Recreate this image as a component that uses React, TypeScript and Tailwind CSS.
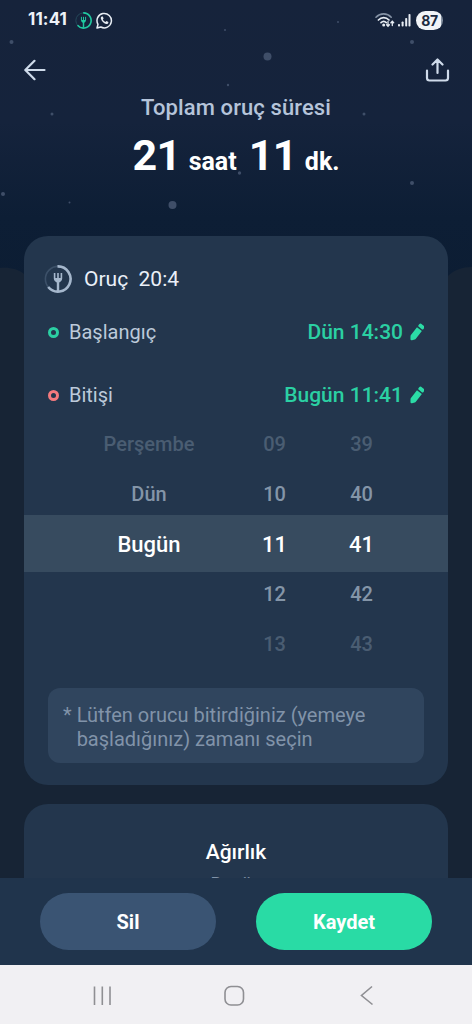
import React from 'react';

const days = ['Perşembe', 'Dün', 'Bugün', '', ''];
const hours = ['09', '10', '11', '12', '13'];
const minutes = ['39', '40', '41', '42', '43'];

const rowStyles = [
  'text-[20px] text-[#4a5d72]',
  'text-[20px] text-[#8495a8]',
  'text-[22px] text-white',
  'text-[20px] text-[#8495a8]',
  'text-[20px] text-[#4a5d72]',
];

const stars = [
  { x: 11.5, y: 42, r: 2 },
  { x: 225, y: 30, r: 1 },
  { x: 228, y: 85, r: 1.2 },
  { x: 267.5, y: 56.5, r: 4 },
  { x: 338, y: 22, r: 1 },
  { x: 412, y: 42, r: 2 },
  { x: 52, y: 114, r: 1.5 },
  { x: 364, y: 114, r: 1.5 },
  { x: 239.5, y: 173, r: 1.7 },
  { x: 412, y: 183, r: 2 },
  { x: 3, y: 194, r: 2 },
  { x: 69.5, y: 202.5, r: 1 },
  { x: 172.5, y: 205, r: 4 },
];

const Sky: React.FC = () => (
  <svg className="absolute inset-x-0 top-0" width="472" height="290" viewBox="0 0 472 290">
    <defs>
      <linearGradient id="sky" x1="0" y1="0" x2="0" y2="1">
        <stop offset="0" stopColor="#16233b" />
        <stop offset="0.42" stopColor="#15233c" />
        <stop offset="0.75" stopColor="#0d1e35" />
        <stop offset="1" stopColor="#0c1d33" />
      </linearGradient>
    </defs>
    <path d="M0 0H472V267C463 267 454 270 448 276V290H24V274C18 269 9 267 0 268Z" fill="url(#sky)" />
    {stars.map((s) => (
      <circle key={`${s.x}-${s.y}`} cx={s.x} cy={s.y} r={s.r} fill="#3f4e68" />
    ))}
  </svg>
);

const ForkRing: React.FC<{ size: number; color: string; track: string }> = ({ size, color, track }) => (
  <svg width={size} height={size} viewBox="0 0 28 28" fill="none">
    <circle cx="14" cy="14" r="12.6" stroke={track} strokeWidth="1.6" />
    <path d="M13.5 1.4A12.6 12.6 0 1 1 4.2 22" stroke={color} strokeWidth="2.6" />
    <path d="M10.6 8v5.4a3.4 3.4 0 0 0 6.8 0V8M14 8v6" stroke={color} strokeWidth="1.6" />
    <path d="M10.6 13h6.8l-.6 2.500-1.600 1.800h-2.400L11.200 15.500z" fill={color} />
    <path d="M14 15v11" stroke={color} strokeWidth="2.4" />
  </svg>
);

const Pencil: React.FC = () => (
  <svg width="15" height="19" viewBox="0 0 15 19" fill="#2bdca6">
    <g transform="rotate(38 7.5 9.500)">
      <rect x="4.600" y="-0.200" width="6.200" height="3.800" rx="1.200" />
      <path d="M4.600 5h6.200v9.800q0 .7-.4 1.200l-1.700 2.300q-1 1.200-2 0L5 16q-.4-.5-.4-1.200z" />
    </g>
  </svg>
);

const StatusBar: React.FC = () => (
  <div className="flex h-10 items-center justify-between pl-7 pr-[29px]">
    <div className="flex items-center">
      <span className="w-[40px] whitespace-nowrap font-['Inter'] text-[17px] font-bold tracking-[0.1px] text-[#eef2f8]">11:41</span>
      <div className="ml-[7px] flex items-center gap-[4px]">
        <ForkRing size={17} color="#20c9a0" track="#24485a" />
        <svg width="17" height="17" viewBox="0 0 17 17" fill="none">
          <path d="M1 16L2 12.300A7.200 7.200 0 1 1 4.800 15Z" stroke="#e7ecf3" strokeWidth="1.5" strokeLinejoin="round" />
          <path d="M5.900 4.600c-.8.300-1.300 1.200-1 2.200.8 2.600 2.700 4.500 5.200 5.200 1 .3 2-.3 2.200-1.200l.1-.8-1.900-.9-1 .9C8.300 9.500 7.300 8.600 6.800 7.500l.8-1-.8-1.900z" fill="#e7ecf3" />
        </svg>
      </div>
    </div>
    <div className="flex items-center">
      <svg width="20" height="16" viewBox="0 0 20 16" fill="none" strokeLinecap="round">
        <path d="M1 5.200C5.300.7 12 .7 16.200 5.200" stroke="#8592a5" strokeWidth="1.6" />
        <path d="M3.400 8C6.400 4.900 11 4.900 14 8" stroke="#e7ecf3" strokeWidth="1.7" />
        <path d="M6 10.700C7.600 9.200 9.700 9.200 11.300 10.700" stroke="#e7ecf3" strokeWidth="1.7" />
        <circle cx="8.7" cy="13" r="1.5" fill="#e7ecf3" />
        <path d="M13 9.500v4.500M11.600 12.800L13 14.300L14.400 12.800M17.300 13.500V9.500M15.900 10.800L17.300 9.300L18.700 10.800" stroke="#e7ecf3" strokeWidth="1.3" />
      </svg>
      <svg className="ml-[3px]" width="13" height="14" viewBox="0 0 13 14" fill="#e7ecf3">
        <rect x="0" y="11" width="2" height="2.5" rx=".8" />
        <rect x="3.6" y="8.5" width="2" height="5" rx=".8" />
        <rect x="7.2" y="5" width="2" height="8.5" rx=".8" />
        <rect x="10.5" y="1" width="2" height="12.5" rx=".8" />
      </svg>
      <div className="ml-[5px] flex h-[19px] w-[27px] items-center justify-center rounded-full bg-linear-to-r from-[#f1f4f8] from-92% to-[#8793a3] to-92% font-['Inter'] text-[14px] font-bold tracking-[-0.3px] text-[#1c2a40]">
        87
      </div>
    </div>
  </div>
);

interface TimeRowProps {
  label: string;
  value: string;
  ring: string;
}

const TimeRow: React.FC<TimeRowProps> = ({ label, value, ring }) => (
  <div className="flex h-[50px] items-center justify-between pl-6 pr-6">
    <div className="flex items-center gap-[10px]">
      <span className={`h-[11px] w-[11px] rounded-full border-[3px] ${ring}`} />
      <span className="text-[20px] text-[#bccada]">{label}</span>
    </div>
    <button className="flex items-center gap-[6px] text-[21px] font-medium text-[#2bd0a3]">
      <span className="pt-px">{value}</span>
      <Pencil />
    </button>
  </div>
);

const App: React.FC = () => (
  <div className="relative flex h-[1024px] w-[472px] flex-col overflow-hidden bg-[#172435] font-['Roboto',sans-serif]">
    <Sky />

    <div className="relative h-[878px] overflow-hidden">
      <StatusBar />

      {/* Top bar */}
      <div className="flex h-[60px] items-center justify-between pl-6 pr-[22px]">
        <svg width="22" height="22" viewBox="0 0 22 22" fill="none" stroke="#cfdbea" strokeWidth="2.2" strokeLinecap="round" strokeLinejoin="round">
          <path d="M20.500 11H1.500M10.500 1.800L1.300 11L10.500 20.200" />
        </svg>
        <svg width="25" height="24" viewBox="0 0 25 24" fill="none" stroke="#cfdbea" strokeWidth="2.2" strokeLinecap="round" strokeLinejoin="round">
          <path d="M2 12.500V20Q2 22.500 4.500 22.500H20.500Q23 22.500 23 20V12.500M12.500 15V2M7.500 6.500L12.500 1.500L17.500 6.500" />
        </svg>
      </div>

      {/* Total duration */}
      <div className="flex h-[136px] flex-col items-center">
        <h1 className="mt-[-5px] text-[22px] font-medium leading-[26px] tracking-[0.1px] text-[#b5c4da]">Toplam oruç süresi</h1>
        <p className="mt-[8px] flex items-baseline whitespace-nowrap text-[25px] font-bold leading-[52px] text-white">
          <span className="text-[43px] tracking-[-0.6px]">21</span>
          <span className="ml-[8px]">saat</span>
          <span className="ml-[12px] text-[43px] tracking-[-0.6px]">11</span>
          <span className="ml-[8px]">dk.</span>
        </p>
      </div>

      {/* Fasting card */}
      <section className="mx-6 h-[549px] rounded-[24px] bg-[#23364d] pt-[15px]">
        <div className="flex h-[56px] items-center gap-[12px] pl-5">
          <ForkRing size={28} color="#a5b7cc" track="#3c5068" />
          <span className="mt-px whitespace-pre text-[21px] text-[#eaf0f8]">Oruç  20:4</span>
        </div>
        <TimeRow label="Başlangıç" value="Dün 14:30" ring="border-[#2bcfa3]" />
        <div className="h-[13px]" />
        <TimeRow label="Bitişi" value="Bugün 11:41" ring="border-[#f47a7e]" />

        <div className="relative -mt-px h-[250px]">
          <div className="absolute inset-x-0 top-[96px] h-[57px] bg-[#374b5f]" />
          {rowStyles.map((style, i) => (
            <div key={hours[i]} className={`relative grid h-[50px] grid-cols-[164px_87px_87px] items-center pl-[43px] text-center font-medium ${style}`}>
              <span>{days[i]}</span>
              <span>{hours[i]}</span>
              <span>{minutes[i]}</span>
            </div>
          ))}
        </div>

        <div className="mx-6 mt-[19px] flex h-[75px] gap-[5px] rounded-[12px] bg-[#30455e] pl-[15px] pt-[15px] text-[20px] leading-6 text-[#8193a9]">
          <span>*</span>
          <p className="whitespace-nowrap">
            Lütfen orucu bitirdiğiniz (yemeye
            <br />
            başladığınız) zamanı seçin
          </p>
        </div>
      </section>

      {/* Weight card */}
      <section className="mx-6 mt-[19px] h-[200px] rounded-t-[24px] bg-[#23364d] pt-[35px] text-center">
        <h2 className="text-[21px] font-medium leading-[26px] text-white">Ağırlık</h2>
        <p className="mt-[7px] text-[18px] leading-[24px] text-[#8193a9]">Bugün</p>
      </section>
    </div>

    <footer className="relative flex h-[87px] gap-10 bg-[#20344c] px-10 pt-[15px]">
      <button className="h-[57px] w-[176px] rounded-full bg-[#3a5473] text-[20px] font-bold text-white">Sil</button>
      <button className="h-[57px] w-[176px] rounded-full bg-[#29dba5] text-[20px] font-bold text-white">Kaydet</button>
    </footer>

    {/* System navigation */}
    <nav className="relative h-[59px] bg-[#f1f0f3]">
      <svg width="472" height="59" viewBox="0 0 472 59" fill="none" stroke="#8f8f93" strokeWidth="1.6">
        <path d="M94.500 21.500V40M102.300 21.500V40M110 21.500V40" />
        <rect x="225" y="21.5" width="18.5" height="18.5" rx="6" />
        <path d="M372 21.500L361.500 30.500L372.500 39.500" />
      </svg>
    </nav>
  </div>
);

export default App;
